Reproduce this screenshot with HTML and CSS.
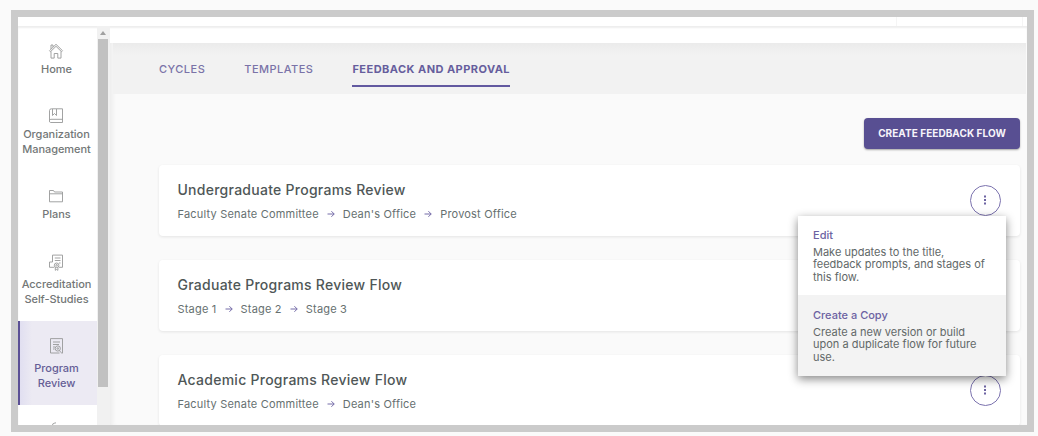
FILE: index.html
```
<!DOCTYPE html>
<html lang="en">
    <head>
        <meta charset="utf-8">
        <title>Feedback and Approval</title>
        <link rel="stylesheet" href="styles.css">
    </head>
    <body>
        <div class="frame">
            <div class="topbar">
                <span class="topbar-cell"></span>
                <span class="topbar-end"></span>
            </div>
            <div class="layout">
                <nav class="sidebar">
                    <a class="nav-item">
                        <svg class="nav-icon" viewBox="0 0 16 16"><path d="M1.5 7.7 8 1.3l6.5 6.4-1 1L8 3.3 2.5 8.7zM3 8.5v6.6h3.2v-4.6h3.6v4.6H13V8.5M3 6V2h2v2" /></svg>
                        <span>Home</span>
                    </a>
                    <a class="nav-item">
                        <svg class="nav-icon" viewBox="0 0 16 16"><path d="M3.5.8h11v13.7h-12A1.3 1.3 0 0 1 1.5 13V2.5Q1.5.8 3.5.8zM1.7 12Q2 11.3 3 11.3h11.5M4.5 1v6.5l2-2 2 2V1" /></svg>
                        <span>Organization Management</span>
                    </a>
                    <a class="nav-item">
                        <svg class="nav-icon" viewBox="0 0 16 16"><path d="M1.5 13.8V2.5h4l1 1.5h8v9.8zM1.5 5.8h13" /></svg>
                        <span>Plans</span>
                    </a>
                    <a class="nav-item tall">
                        <svg class="nav-icon" viewBox="0 0 16 16"><path d="M4.5 9V2.1h10v12.2H11M6.8 5h5.7M6.8 7.5h5.7M11 10h1.5M4.5 9h-3v5.3h4.7M7.3 14.3v3l1.3-.8 1.3.8v-3" /><circle cx="8.6" cy="12.3" r="2.3" /><circle cx="8.6" cy="12.3" r=".8" /></svg>
                        <span>Accreditation Self-Studies</span>
                    </a>
                    <a class="nav-item tall active">
                        <svg class="nav-icon" viewBox="0 0 16 16"><path d="M11.5 15h-9V.6h12V15M5 4h7M5 6.5h6M5 9h2M5 11h1.5M11.3 12.5l3 3.3" /><circle cx="9.8" cy="10.5" r="2.6" /><circle cx="9.8" cy="10.5" r=".8" /></svg>
                        <span>Program Review</span>
                    </a>
                    <a class="nav-item last">
                        <svg class="nav-icon" viewBox="0 0 16 16"><path d="M4.5 2.2Q6 1 8 .8M5 2.2l-2 2" /></svg>
                    </a>
                </nav>
                <div class="scrollbar">
                    <div class="scroll-arrow"></div>
                    <div class="scroll-thumb"></div>
                </div>
                <main class="main">
                    <div class="tabs">
                        <a class="tab">CYCLES</a>
                        <a class="tab">TEMPLATES</a>
                        <a class="tab selected">FEEDBACK AND APPROVAL</a>
                    </div>
                    <div class="content">
                        <button class="create">CREATE FEEDBACK FLOW</button>
                        <section class="card">
                            <div>
                                <h2>Undergraduate Programs Review</h2>
                                <p class="stages">
                                    <span>Faculty Senate Committee</span>
                                    <svg class="arrow" viewBox="0 0 8 8"><path d="M.5 4h6.7M4.4 1.2 7.2 4 4.4 6.8" /></svg>
                                    <span>Dean's Office</span>
                                    <svg class="arrow" viewBox="0 0 8 8"><path d="M.5 4h6.7M4.4 1.2 7.2 4 4.4 6.8" /></svg>
                                    <span>Provost Office</span>
                                </p>
                            </div>
                            <div class="more">
                                <svg class="dots" viewBox="0 0 4 10"><path d="M1 .5h2v2H1zM1 4h2v2H1zM1 7.5h2v2H1z" /></svg>
                                <div class="menu">
                                    <div class="menu-item">
                                        <h3>Edit</h3>
                                        <p>Make updates to the title, feedback prompts, and stages of this flow.</p>
                                    </div>
                                    <div class="menu-item hover">
                                        <h3>Create a Copy</h3>
                                        <p>Create a new version or build upon a duplicate flow for future use.</p>
                                    </div>
                                </div>
                            </div>
                        </section>
                        <section class="card">
                            <div>
                                <h2>Graduate Programs Review Flow</h2>
                                <p class="stages">
                                    <span>Stage 1</span>
                                    <svg class="arrow" viewBox="0 0 8 8"><path d="M.5 4h6.7M4.4 1.2 7.2 4 4.4 6.8" /></svg>
                                    <span>Stage 2</span>
                                    <svg class="arrow" viewBox="0 0 8 8"><path d="M.5 4h6.7M4.4 1.2 7.2 4 4.4 6.8" /></svg>
                                    <span>Stage 3</span>
                                </p>
                            </div>
                        </section>
                        <section class="card">
                            <div>
                                <h2>Academic Programs Review Flow</h2>
                                <p class="stages">
                                    <span>Faculty Senate Committee</span>
                                    <svg class="arrow" viewBox="0 0 8 8"><path d="M.5 4h6.7M4.4 1.2 7.2 4 4.4 6.8" /></svg>
                                    <span>Dean's Office</span>
                                </p>
                            </div>
                            <div class="more">
                                <svg class="dots" viewBox="0 0 4 10"><path d="M1 .5h2v2H1zM1 4h2v2H1zM1 7.5h2v2H1z" /></svg>
                            </div>
                        </section>
                    </div>
                </main>
            </div>
        </div>
    </body>
</html>
```
FILE: styles.css
```
* {
    box-sizing: border-box;
}

body {
    margin: 0;
    padding: 10px 4px 4px 11px;
    height: 436px;
    overflow: hidden;
    background: #fafafa;
    font-family: Inter, "Liberation Sans", sans-serif;
    color: #4f5757;
}

h2, h3, p {
    margin: 0;
}

.frame {
    height: 422px;
    border: 7px solid #cbcbcb;
    background: #fff;
    overflow: hidden;
}

.topbar {
    height: 9px;
    display: flex;
    justify-content: flex-end;
}

.topbar-cell {
    width: 126px;
    border-left: 1px solid #f5f5f5;
}

.topbar-end {
    width: 5px;
    border-left: 1px solid #f5f5f5;
}

.layout {
    display: flex;
    height: 399px;
    box-shadow: inset 0 2px 2px #eeeeee;
}

.sidebar {
    width: 79px;
    overflow: hidden;
}

.nav-item {
    display: flex;
    flex-direction: column;
    align-items: center;
    padding: 17px 4px 14px 2px;
    font-size: 11px;
    font-weight: 500;
    line-height: 15px;
    letter-spacing: -0.05px;
    text-align: center;
    color: #737777;
}

.nav-icon {
    width: 16px;
    height: 16px;
    margin: 0 1px 3px 0;
    fill: none;
    stroke: #979999;
    stroke-width: 0.9;
    overflow: visible;
}

.tall .nav-icon {
    margin-bottom: 8px;
}

.active {
    height: 84px;
    background: linear-gradient(to right, #dfddf0, #eceaf3 14px);
    box-shadow: inset 2px 0 #5b5095;
    color: #655e96;
}

.active .nav-icon {
    margin-bottom: 7px;
}

.scrollbar {
    width: 13px;
    padding: 0 2px 0 1px;
    background: #f1f1f1;
}

.scroll-arrow {
    width: 0;
    margin: 5px auto 4px;
    border: 3px solid transparent;
    border-top: 0;
    border-bottom: 4px solid #a0a0a0;
}

.scroll-thumb {
    height: 348px;
    background: #c1c1c1;
}

.main {
    flex: 1;
    margin-top: 17px;
    padding-right: 1px;
    background: #fafafa;
    box-shadow: inset 5px 0 5px -3px #eaeaea;
}

.tabs {
    display: flex;
    gap: 39px;
    height: 51px;
    margin-left: 3px;
    padding: 16px 0 0 46px;
    background: linear-gradient(#ebebeb, #f2f2f2 12px);
}

.tab {
    height: 28px;
    font-size: 11px;
    font-weight: 500;
    line-height: 20px;
    letter-spacing: 0.48px;
    color: #7a73a8;
}

.selected {
    border-bottom: 2px solid #6259a0;
    font-weight: 700;
    letter-spacing: 0.45px;
    color: #665e9d;
}

.content {
    display: flex;
    flex-direction: column;
    padding: 24px 6px 0 48.5px;
}

.create {
    align-self: flex-end;
    width: 156px;
    height: 31px;
    margin-bottom: 16px;
    padding: 0 0 2px;
    border: 0;
    border-radius: 4px;
    background: #584f92;
    box-shadow: 0 1px 2px rgba(0, 0, 0, 0.35);
    font-family: inherit;
    font-size: 10px;
    font-weight: 700;
    letter-spacing: 0.05px;
    color: #f6f4fa;
}

.card {
    display: flex;
    justify-content: space-between;
    height: 71px;
    margin-bottom: 24px;
    padding: 16px 19px 0;
    border-radius: 4px;
    background: #fff;
    box-shadow: 0 1px 3px rgba(0, 0, 0, 0.09);
}

.card h2 {
    font-size: 14px;
    font-weight: 500;
    line-height: 18px;
    letter-spacing: 0.26px;
}

.stages {
    display: flex;
    align-items: center;
    gap: 8px;
    margin-top: 7px;
    font-size: 11px;
    line-height: 16px;
    letter-spacing: 0.2px;
    color: #667070;
}

.arrow {
    width: 8px;
    height: 8px;
    fill: none;
    stroke: #756ca8;
}

.more {
    position: relative;
    display: flex;
    align-items: center;
    justify-content: center;
    width: 31px;
    height: 31px;
    margin-top: 4px;
    border: 1px solid #7b72ae;
    border-radius: 50%;
}

.dots {
    width: 4px;
    height: 10px;
    margin: 0 1px 1px 0;
    fill: #6c63a2;
}

.menu {
    position: absolute;
    z-index: 1;
    top: 30px;
    right: -6px;
    width: 208px;
    height: 160px;
    background: #fff;
    box-shadow: 0 3px 9px rgba(0, 0, 0, 0.48);
}

.menu-item {
    height: 79px;
    padding: 13px 15px 0;
    font-size: 11px;
    line-height: 12.5px;
    color: #626868;
}

.menu-item h3 {
    margin-bottom: 4px;
    font-size: 11px;
    font-weight: 500;
    color: #6c62a2;
}

.hover {
    height: 81px;
    padding-top: 14px;
    background: #f3f3f3;
}
```
